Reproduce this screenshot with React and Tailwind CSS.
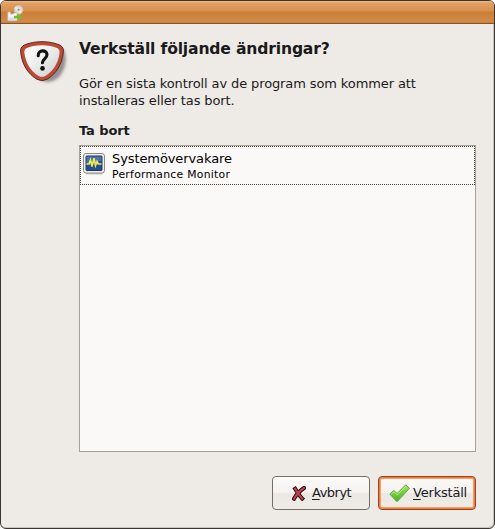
import React from "react";

function PackageIcon() {
  return (
    <svg width="18" height="17" viewBox="0 0 18 17" className="block">
      <circle cx="11.5" cy="4.8" r="4.4" fill="#dbdccf" stroke="#c9bfae" strokeWidth=".7" />
      <path d="M7.5 3.5 L11 5 L9 1.2 Z M15 6.5 L11 5 L13 8.8 Z" fill="#f3f5ec" />
      <circle cx="11.5" cy="4.8" r="1.5" fill="#7f9b91" stroke="#f4f4ee" strokeWidth=".8" />
      <path d="M.8 7 H3.5 V9 H6.5 V8 H10 V15.8 H.8 Z" fill="#f5f4fa" stroke="#c5b4b4" strokeWidth=".7" />
      <path d="M2 12.5 H9 V15 H2 Z" fill="#d9dced" />
      <path d="M7 10.8 H10.5 V8.8 L15.2 12 L10.5 15 V13.2 H7 Z" fill="#69c52b" />
    </svg>
  );
}

function QuestionShield() {
  return (
    <svg width="50" height="48" viewBox="0 0 50 48" className="block">
      <defs>
        <linearGradient id="shieldFace" x1="0" y1="0" x2="1" y2="1">
          <stop offset="0" stopColor="#fff" />
          <stop offset=".5" stopColor="#ebebeb" />
          <stop offset="1" stopColor="#cbcbcb" />
        </linearGradient>
        <filter id="shieldShade" x="-20%" y="-20%" width="140%" height="140%">
          <feGaussianBlur stdDeviation="1.8" />
        </filter>
      </defs>
      <path d="M8 8 Q27 2 44 10 Q49 25 39 37 Q31 44 23 41 Q7 30 8 8Z" fill="#555" opacity=".6" filter="url(#shieldShade)" />
      <path d="M4 5.2 C14 .5 30 .5 40 5.2 Q44.2 7.5 43.3 12.5 C41.8 24.5 36.5 33.5 27 39.3 Q22 42 17 39.3 C7.5 33.5 2.2 24.5 .7 12.5 Q-.2 7.5 4 5.2Z" fill="#bd4b34" stroke="#5a2a23" strokeWidth="1" />
      <path d="M6.3 8.3 C14.5 4.3 29.5 4.3 37.7 8.3 Q40.1 9.8 39.6 13 C38.2 23.5 33.4 31 25.3 35.9 Q22 37.7 18.7 35.9 C10.6 31 5.8 23.5 4.4 13 Q3.9 9.8 6.3 8.3Z" fill="url(#shieldFace)" />
      <path d="M18.2 15.7 C18 9.3 27 9.5 27 14.8 C27 18.6 22.4 19 22.4 22.8" fill="none" stroke="#111" strokeWidth="3.1" strokeLinecap="round" />
      <circle cx="22.5" cy="28.4" r="2.3" fill="#111" />
    </svg>
  );
}

function MonitorIcon() {
  return (
    <svg width="22" height="22" viewBox="0 0 22 22" className="block">
      <path d="M3 20.8 H19" stroke="#c2c2be" strokeWidth="1.2" />
      <rect x=".5" y=".5" width="21" height="19.5" rx="2.5" fill="#f0f0ed" stroke="#8a8a86" />
      <rect x="3" y="3" width="16" height="14.5" rx=".5" fill="#264f91" stroke="#20365f" />
      <path d="M3.5 3.5 H18.5 V8 Q10 8 3.5 12Z" fill="#5c82b9" opacity=".7" />
      <path d="M3.5 11 H6 L7.5 7 L9 13.5 L11 5.2 L12.5 12.5 L14 8.5 L15.3 11 H18.5" fill="none" stroke="#f0e957" strokeWidth="1.7" />
    </svg>
  );
}

function CancelIcon() {
  return (
    <svg width="14" height="15" viewBox="0 0 14 15" className="block">
      <path d="M3.2 2.8 C5 5.5 7 9.5 10.2 12.6 M12 2 C8 4.5 4.5 8.5 2 12.7" fill="none" stroke="#19090b" strokeWidth="4" strokeLinecap="square" />
      <path d="M3.2 2.8 C5 5.5 7 9.5 10.2 12.6 M12 2 C8 4.5 4.5 8.5 2 12.7" fill="none" stroke="#c03f49" strokeWidth="2.2" strokeLinecap="square" />
    </svg>
  );
}

function ApplyIcon() {
  return (
    <svg width="22" height="19" viewBox="0 0 22 19" className="block">
      <defs>
        <linearGradient id="tick" x1="0" y1="0" x2="0" y2="1">
          <stop offset="0" stopColor="#a2e85d" />
          <stop offset="1" stopColor="#42b516" />
        </linearGradient>
      </defs>
      <path d="M.8 10 L4.8 6.5 L8.2 9.5 L16.7 .8 L20.5 4.3 L8 17.8Z" fill="url(#tick)" stroke="#6b9f48" strokeLinejoin="round" />
      <path d="M2.3 10 L4.9 7.8 L8.3 10.8 L16.8 2.2" fill="none" stroke="#c5f59a" strokeWidth=".8" />
    </svg>
  );
}

export default function App() {
  return (
    <div className="h-[529px] w-[495px] overflow-hidden bg-white font-['DejaVu_Sans',sans-serif] text-[#1a1a1a]">
      <div className="flex h-full flex-col overflow-hidden rounded-[6px] border border-[#3b3531] bg-[#eeebe7] shadow-[inset_-1px_-1px_0_#c9c5bd]">
        <header className="flex h-[23px] shrink-0 border-b border-[#875329] bg-[linear-gradient(#f1bd87_0px,#e2a066_2px,#d98f4d_10px,#c87f38_11px,#d38a45_21px,#bd7838_22px)] pt-[4px] pl-[6px]">
          <PackageIcon />
        </header>
        <main className="flex h-[428px] shrink-0 pr-[18px] pl-[19px]">
          <div className="w-[59px] shrink-0 pt-[16px]">
            <QuestionShield />
          </div>
          <div className="flex min-w-0 flex-1 flex-col">
            <h1 className="mt-[15px] h-[20px] text-[15.6px] leading-[20px] font-bold tracking-[-0.17px] whitespace-nowrap">Verkställ följande ändringar?</h1>
            <p className="mt-[16px] h-[34px] text-[13px] leading-[17px] tracking-[-0.11px] whitespace-nowrap">
              Gör en sista kontroll av de program som kommer att<br />installeras eller tas bort.
            </p>
            <h2 className="mt-[13px] h-[17px] text-[13px] leading-[17px] font-bold tracking-[-0.1px]">Ta bort</h2>
            <section className="mt-[6px] flex-1 border border-[#a89f95] bg-[#faf9f7]">
              <div className="flex h-[39px] border border-dotted border-[#4a443e] pl-[2px]">
                <div className="mt-[6px] w-[29px]"><MonitorIcon /></div>
                <div className="pt-[3px] text-black">
                  <div className="h-[17px] text-[13px] leading-[17px] tracking-[-0.1px]">Systemövervakare</div>
                  <div className="h-[14px] pt-px text-[10.8px] leading-[14px] tracking-[0.28px]">Performance Monitor</div>
                </div>
              </div>
            </section>
          </div>
        </main>
        <footer className="mt-[24px] flex h-[34px] shrink-0 justify-end gap-[8px] pr-[18px]">
          <button className="flex h-[34px] w-[98px] items-center rounded-[4px] border border-[#756f66] bg-[linear-gradient(#fcfbfa_0%,#f5f2f0_48%,#ebe7e3_52%,#efece8_100%)] pl-[19px] text-[13px] leading-[17px] tracking-[-0.5px]">
            <CancelIcon />
            <span className="-mt-px ml-[6px]"><span className="underline underline-offset-2">A</span>vbryt</span>
          </button>
          <button className="flex h-[34px] w-[98px] items-center rounded-[4px] border border-[#984521] bg-[linear-gradient(#fcfbfa_0%,#f5f2f0_48%,#ebe7e3_52%,#efece8_100%)] pl-[10px] text-[13px] leading-[17px] tracking-[-0.2px] shadow-[inset_0_0_0_1px_#f47a35,inset_0_0_0_2px_#ff9a62]">
            <ApplyIcon />
            <span className="-mt-px ml-[2px]"><span className="underline underline-offset-2">V</span>erkställ</span>
          </button>
        </footer>
      </div>
    </div>
  );
}
